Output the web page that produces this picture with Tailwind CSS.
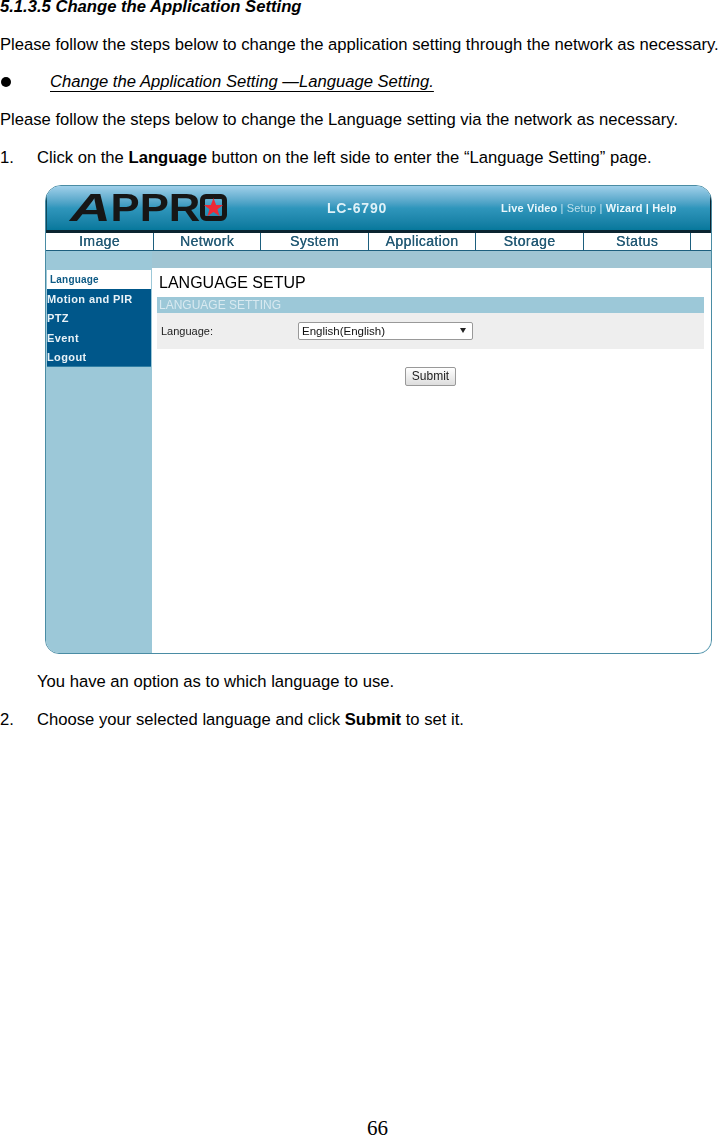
<!DOCTYPE html>
<html lang="en">
<head>
  <meta charset="UTF-8" />
  <title>5.1.3.5 Change the Application Setting</title>
  <script src="https://cdn.jsdelivr.net/npm/@tailwindcss/browser@4"></script>
</head>
<body class="bg-white text-black font-['Liberation_Sans',Arial,sans-serif]">
  <div class="flex flex-col h-[1135px] overflow-hidden text-[16.64px] leading-[12px]">
    <!-- manual text -->
    <div class="flex flex-col gap-[25.7px] mt-[1px]">
      <p class="font-bold italic">5.1.3.5 Change the Application Setting</p>
      <p class="whitespace-nowrap">Please follow the steps below to change the application setting through the network as necessary.</p>
      <div class="flex items-center">
        <span class="w-[10px] h-[10px] ml-[1px] rounded-full bg-black"></span>
        <span class="ml-[39px] italic underline underline-offset-[4px]">Change the Application Setting —Language Setting.</span>
      </div>
      <p>Please follow the steps below to change the Language setting via the network as necessary.</p>
      <div class="flex">
        <span class="w-[37px]">1.</span>
        <span>Click on the <b>Language</b> button on the left side to enter the “Language Setting” page.</span>
      </div>
    </div>

    <!-- camera web page screenshot -->
    <div class="ml-[45px] mt-[21.2px] w-[667px] h-[469px] flex flex-col shrink-0 rounded-t-[16px] rounded-b-[14px] border border-[#4a8ca4] overflow-hidden bg-white blur-[0.3px]">
      <div class="h-[47px] shrink-0 flex items-center bg-gradient-to-b from-[#9fd0ea] via-[#2f96bc] to-[#06789c] border-b-[3px] border-[#0b2430] shadow-[inset_-1px_0_0_#0b2430,inset_1px_0_0_#0b4a60]">
        <div class="relative ml-[24px] w-[157px] h-[30px] flex items-center text-[39px] leading-[30px] font-bold text-[#161616]">
          <span class="scale-x-[1.12] origin-left whitespace-nowrap"><i class="inline-block scale-x-[1.3] origin-left mr-[8px]">A</i>PPR</span>
          <!-- O of the logo holds the red star -->
          <span class="absolute left-[130px] top-[1px] w-[27px] h-[27px] rounded-[6px] border-[5px] border-[#161616] flex items-center justify-center">
            <svg class="w-[21px] h-[21px] shrink-0" viewBox="0 0 24 24"><polygon fill="#ee2a35" points="12,1 15,9 23,9 16.5,14 19,22 12,17 5,22 7.5,14 1,9 9,9"/></svg>
          </span>
        </div>
        <span class="ml-[100px] text-[14px] font-bold text-[#dff1f8] tracking-[0.8px]">LC-6790</span>
        <div class="ml-[114px] text-[11px] font-bold text-[#eaf6fb] tracking-[0.15px] whitespace-nowrap">Live Video<span class="font-normal text-[#bfe0ec]"> | Setup | </span>Wizard | Help</div>
      </div>
      <div class="h-[18px] shrink-0 flex text-[14px] leading-[17px] tracking-[0.4px] text-[#245a75] border-b border-[#1d5f7e] [text-shadow:0.3px_0_0_#245a75]">
        <span class="w-[108px] text-center border-r border-[#1d5f7e]">Image</span>
        <span class="w-[107px] text-center border-r border-[#1d5f7e]">Network</span>
        <span class="w-[108px] text-center border-r border-[#1d5f7e]">System</span>
        <span class="w-[107px] text-center border-r border-[#1d5f7e]">Application</span>
        <span class="w-[108px] text-center border-r border-[#1d5f7e]">Storage</span>
        <span class="w-[107px] text-center border-r border-[#1d5f7e]">Status</span>
      </div>
      <div class="flex flex-1 bg-[#9cc8d8]">
        <!-- left menu -->
        <div class="w-[106px] shrink-0 pt-[19px] pl-[1px] pr-[1px]">
          <div class="h-[19px] pl-[3px] bg-white text-[#0d5a85] text-[10px] font-bold leading-[19px] tracking-[0.2px]">Language</div>
          <div class="h-[78px] pt-[1px] bg-[#00578a] border-b border-[#2f7ea3] flex flex-col text-[11px] font-bold leading-[19.5px] text-[#e8f2f7] tracking-[0.4px]">
            <span>Motion and PIR</span>
            <span>PTZ</span>
            <span>Event</span>
            <span>Logout</span>
          </div>
        </div>
        <!-- main area -->
        <div class="flex-1 flex flex-col">
          <div class="h-[17px] shrink-0 bg-[#a0c5d3]"></div>
          <div class="flex-1 bg-white px-[5px] rounded-br-[14px]">
            <h1 class="pl-[2px] text-[16px] leading-[29px] h-[29px] text-black">LANGUAGE SETUP</h1>
            <div class="w-[547px] h-[16px] pl-[2px] bg-[#9cc8d8] text-[12px] leading-[16px] text-[#d8e9f0]">LANGUAGE SETTING</div>
            <div class="w-[547px] h-[36px] bg-[#eeeeee] flex items-center">
              <span class="ml-[4px] w-[137px] text-[11px] text-[#222]">Language:</span>
              <div class="w-[175px] h-[18px] bg-white border border-[#999] rounded-[2px] flex items-center justify-between pl-[3px] pr-[6px] text-[11.5px] text-[#111]">
                <span>English(English)</span>
                <span class="w-0 h-0 border-x-[3px] border-x-transparent border-t-[5px] border-t-[#222]"></span>
              </div>
            </div>
            <div class="w-[547px] flex justify-center pt-[18px]">
              <button class="w-[51px] h-[19px] border border-[#999] rounded-[2px] bg-gradient-to-b from-white to-[#ddd] text-[12px] leading-[16px] text-[#222]">Submit</button>
            </div>
          </div>
        </div>
      </div>
    </div>

    <div class="flex flex-col gap-[25.6px] mt-[22.5px]">
      <p class="pl-[37px]">You have an option as to which language to use.</p>
      <div class="flex">
        <span class="w-[37px]">2.</span>
        <span>Choose your selected language and click <b>Submit</b> to set it.</span>
      </div>
    </div>

    <div class="mt-auto pl-[367px] font-['Liberation_Serif',serif] text-[21px] leading-[14px]">66</div>
  </div>
</body>
</html>
